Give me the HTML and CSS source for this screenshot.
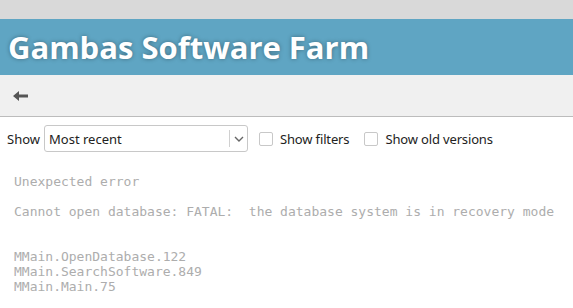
FILE: index.html
```html
<!DOCTYPE html>
<html lang="en">
<head>
    <meta charset="UTF-8">
    <title>Gambas Software Farm</title>
    <link rel="stylesheet" href="styles.css">
</head>
<body>
    <div class="topbar"></div>

    <!-- Header -->
    <div class="header">
        <h1>Gambas Software Farm</h1>
    </div>

    <!-- Toolbar -->
    <div class="toolbar">
        <button class="back-btn" title="Back">
            <svg width="18" height="12" viewBox="0 0 18 12">
                <path d="M1 6 L7 1 L7 4.5 L16 4.5 L16 7.5 L7 7.5 L7 11 Z" fill="#555"/>
            </svg>
        </button>
    </div>

    <!-- Filters -->
    <div class="filters">
        <span class="label">Show</span>
        <div class="select">
            <span class="select-value">Most recent</span>
            <span class="select-arrow">
                <svg width="10" height="6" viewBox="0 0 10 6">
                    <path d="M1 1 L5 5 L9 1" fill="none" stroke="#666" stroke-width="1.4"/>
                </svg>
            </span>
        </div>
        <label class="check"><span class="box"></span>Show filters</label>
        <label class="check"><span class="box"></span>Show old versions</label>
    </div>

    <!-- Error -->
    <div class="error">
        <p>Unexpected error</p>
        <p>Cannot open database: FATAL:  the database system is in recovery mode</p>
        <pre class="stack">MMain.OpenDatabase.122
MMain.SearchSoftware.849
MMain.Main.75</pre>
    </div>
</body>
</html>
```

FILE: styles.css
```css
body {
    margin: 0;
    background: white;
    font-family: 'Noto Sans', 'Open Sans', sans-serif;
    overflow: hidden;
}

.topbar {
    height: 19px;
    background: #d9d9d9;
}

.header {
    background: #5fa5c3;
    height: 56px;
    display: flex;
    align-items: center;
    padding: 0 8px;
}

.header h1 {
    margin: 0;
    color: white;
    font-family: 'Open Sans', sans-serif;
    font-size: 31px;
    font-weight: bold;
    text-shadow: 0 0 4px rgba(0,0,0,0.35);
}

.toolbar {
    height: 41px;
    background: #f0f0f0;
    border-bottom: 1px solid #bcbcbc;
    display: flex;
    align-items: center;
    padding-left: 8px;
}

.back-btn {
    background: none;
    border: none;
    padding: 2px 4px;
    display: flex;
    cursor: pointer;
}

.filters {
    display: flex;
    align-items: center;
    height: 27px;
    margin-top: 8px;
    padding-left: 7px;
    font-size: 13px;
    color: #222;
}

.label {
    margin-right: 4px;
}

.select {
    width: 202px;
    height: 25px;
    border: 1px solid #c8c8c8;
    border-radius: 3px;
    display: flex;
    align-items: center;
    background: white;
}

.select-value {
    flex: 1;
    padding-left: 4px;
}

.select-arrow {
    width: 17px;
    height: 17px;
    border-left: 1px solid #d0d0d0;
    display: flex;
    align-items: center;
    justify-content: center;
}

.check {
    display: flex;
    align-items: center;
    margin-left: 11px;
    letter-spacing: -0.15px;
}

.check + .check {
    margin-left: 15px;
}

.box {
    width: 12px;
    height: 12px;
    border: 1px solid #c8c8c8;
    border-radius: 2px;
    background: white;
    margin-right: 7px;
}

.error {
    padding: 0 14px;
    font-family: 'DejaVu Sans Mono', monospace;
    font-size: 13px;
    color: #adadad;
}

.error p {
    margin: 0;
    line-height: 15px;
    white-space: pre;
}

.error p:first-child {
    margin-top: 22px;
}

.error p + p {
    margin-top: 15px;
}

.stack {
    margin: 30px 0 0;
    font-family: inherit;
    font-size: 13px;
    line-height: 15px;
}
```
